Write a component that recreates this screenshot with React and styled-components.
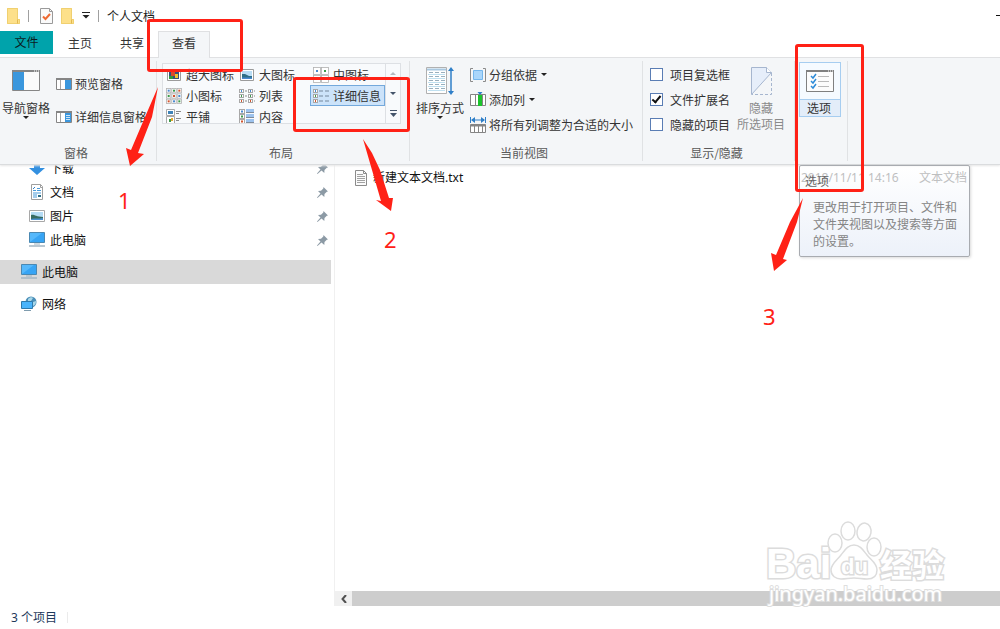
import React from 'react';
import styled, { createGlobalStyle } from 'styled-components'

const GlobalStyle = createGlobalStyle`
  * {
    box-sizing: border-box;
  }
  body {
    margin: 0;
    background: #fff;
    color: #1c1c1c;
    font: 12px/16px "Noto Sans CJK SC", "Liberation Sans", sans-serif;
  }
  button, input {
    margin: 0;
    padding: 0;
    border: 0;
    background: none;
    color: inherit;
    font: inherit;
  }
  svg {
    display: block;
    flex: none;
  }
`

const Window = styled.div`
  position: relative;
  display: flex;
  flex-direction: column;
  min-height: 100vh;
  overflow: hidden;
`

const TitleBar = styled.header`
  display: flex;
  align-items: center;
  height: 31px;
  padding-left: 7px;
  gap: 8px;
`

const Separator = styled.span`
  width: 1px;
  height: 12px;
  margin-right: ${props => (props.$wide ? '3px' : '0')};
  background: #a0a0a0;
`

const Title = styled.h1`
  margin: 0;
  flex: 1;
  font-size: 12px;
  font-weight: 400;
`

const IconButton = styled.button`
  display: flex;
`

const Tabs = styled.nav`
  display: flex;
  height: 27px;
  border-bottom: 1px solid #dfe0e2;
`

const Tab = styled.button`
  width: 52px;
  height: ${props => (props.$active ? '27px' : '24px')};
  padding-bottom: ${props => (props.$active ? '4px' : '1px')};
  border: 1px solid ${props => (props.$active ? '#dfe0e2' : 'transparent')};
  border-bottom: 0;
  background: ${props => (props.$active ? '#f4f6f8' : 'none')};
  color: #333;
`

const FileTab = styled(Tab)`
  width: 53px;
  height: 23px;
  margin-right: 1px;
  border: 0;
  background: #00a3ab;
  color: #0b1c1e;
`

const Ribbon = styled.div`
  display: flex;
  height: 107px;
  flex: none;
  background: #f4f6f8;
  border-bottom: 1px solid #dadcde;
  box-shadow: 0 1px 2px #e6e6e6;
  color: #333;
  z-index: 1;
`

const Group = styled.section`
  display: flex;
  flex-direction: column;
  flex: none;
  width: ${props => props.$width}px;
  background: linear-gradient(#e0e2e4, #e0e2e4) right 3px / 1px 100px no-repeat;
`

const GroupBody = styled.div`
  display: flex;
  flex: 1;
  padding-left: ${props => props.$inset || 0}px;
`

const GroupLabel = styled.h2`
  margin: 0 5px 3px 0;
  font-size: 12px;
  font-weight: 400;
  text-align: center;
  color: #5a5a5a;
`

const BigButton = styled.button`
  display: flex;
  flex-direction: column;
  align-items: center;
  width: ${props => props.$width}px;
  padding-top: 8px;
  white-space: nowrap;
  &:disabled {
    color: #8a8a8a;
  }
`

const BigIcon = styled.span`
  display: flex;
  align-items: center;
  height: 30px;
  margin-bottom: 4px;
`

const Stack = styled.div`
  display: flex;
  flex-direction: column;
  padding: ${props => props.$top}px 0 0 ${props => props.$left || 0}px;
`

const SmallButton = styled.button`
  display: flex;
  align-items: center;
  gap: 3px;
  height: ${props => props.$height}px;
  white-space: nowrap;
`

const Caret = styled.span`
  border: 3px solid transparent;
  border-top-color: #222;
  border-bottom: 0;
  margin-left: ${props => (props.$inline ? '1px' : '0')};
`

const Gallery = styled.div`
  display: flex;
  height: 61px;
  margin-top: 5px;
  border: 1px solid #dde0e4;
  background: #f8fafc;
  overflow: hidden;
`

const GalleryGrid = styled.div`
  display: grid;
  grid-template-columns: 73px 74px 75px;
  grid-auto-rows: 21px;
`

const GalleryItem = styled.button`
  display: flex;
  align-items: center;
  gap: 4px;
  padding-left: 2px;
  border: 1px solid ${props => (props.$selected ? '#74a9dc' : 'transparent')};
  background: ${props => (props.$selected ? '#cce3fa' : 'none')};
  white-space: nowrap;
`

const GalleryScroll = styled.div`
  display: flex;
  flex-direction: column;
  width: 15px;
  border-left: 1px solid #dde0e4;
`

const ScrollStep = styled.button`
  display: flex;
  align-items: center;
  justify-content: center;
  height: 20px;
`

const CheckRow = styled.label`
  display: flex;
  align-items: center;
  gap: 7px;
  height: 25px;
  white-space: nowrap;
`

const CheckBox = styled.input`
  appearance: none;
  position: relative;
  width: 13px;
  height: 13px;
  border: 1px solid #5a7db4;
  background: #fff;
  &:checked::after {
    content: '';
    box-sizing: border-box;
    position: absolute;
    left: 3px;
    top: 0;
    width: 5px;
    height: 9px;
    border: solid #111;
    border-width: 0 2px 2px 0;
    transform: rotate(40deg);
  }
`

const OptionsButton = styled.button`
  width: 42px;
  height: 55px;
  margin-top: 4px;
  border: 1px solid #a6cdf0;
  background: #f5faff;
`

const OptionsIcon = styled.span`
  display: flex;
  align-items: center;
  justify-content: center;
  height: 36px;
`

const OptionsText = styled.span`
  display: block;
  height: 17px;
  border-top: 1px solid #a6cdf0;
  background: #e3edf9;
  padding-right: 2px;
`

const Content = styled.div`
  display: flex;
  flex: 1;
`

const Sidebar = styled.nav`
  width: 335px;
  flex: none;
  padding-right: 3px;
  border-right: 1px solid #f0f0f0;
  overflow: hidden;
`

const Tree = styled.ul`
  list-style: none;
  margin: -9px 0 0;
  padding: 0;
`

const TreeRow = styled.li`
  display: flex;
  align-items: center;
  height: 24px;
  margin-top: ${props => (props.$root ? '8px' : '0')};
  padding: 0 3px 0 ${props => (props.$root ? '21px' : '29px')};
  background: ${props => (props.$selected ? '#d9d9d9' : 'none')};
`

const TreeLink = styled.a`
  display: flex;
  align-items: center;
  gap: 5px;
  flex: 1;
  height: 22px;
  padding-bottom: 1px;
  color: #111;
  text-decoration: none;
`

const Files = styled.main`
  display: flex;
  flex-direction: column;
  flex: 1;
  min-width: 0;
`

const FileTable = styled.table`
  width: 100%;
  table-layout: fixed;
  border-collapse: collapse;
  td {
    height: 25px;
    padding: 0;
    white-space: nowrap;
    color: #8e8e8e;
    font-family: "Noto Sans", "Noto Sans CJK SC", sans-serif;
  }
`

const FileName = styled.span`
  display: flex;
  align-items: center;
  gap: 5px;
  padding-left: 19px;
  color: #111;
`

const ScrollBar = styled.div`
  display: flex;
  height: 15px;
  margin-top: auto;
  background: #f0f0f0;
`

const ScrollLeft = styled.button`
  display: flex;
  align-items: center;
  justify-content: center;
  width: 17px;
`

const ScrollThumb = styled.div`
  flex: 1;
  background: #cdcdcd;
`

const StatusBar = styled.footer`
  display: flex;
  align-items: center;
  gap: 10px;
  height: 23px;
  padding-left: 11px;
  color: #1e395b;
  font-family: "Noto Sans", "Noto Sans CJK SC", sans-serif;
  span {
    width: 1px;
    height: 11px;
    background: #ebebeb;
  }
`

const Tooltip = styled.div`
  position: absolute;
  left: 799px;
  top: 165px;
  width: 171px;
  height: 92px;
  padding: 7px 0 0 5px;
  border: 1px solid #a8abb0;
  border-radius: 2px;
  background: linear-gradient(rgba(255, 255, 255, 0.4), rgba(232, 238, 248, 0.8));
  box-shadow: 1px 1px 3px rgba(0, 0, 0, 0.15);
  color: #666;
  z-index: 2;
  p {
    width: 150px;
    margin: 9px 0 0 8px;
    line-height: 17px;
    color: #858585;
  }
`

const Marks = styled.div`
  position: absolute;
  inset: 0;
  pointer-events: none;
  z-index: 3;
`

const MarkBox = styled.div`
  position: absolute;
  left: ${props => props.$x}px;
  top: ${props => props.$y}px;
  width: ${props => props.$w}px;
  height: ${props => props.$h}px;
  border: 3px solid #ff2116;
  border-radius: 3px;
`

const MarkNumber = styled.span`
  position: absolute;
  left: ${props => props.$x}px;
  top: ${props => props.$y}px;
  font: 22px/24px "Noto Sans", sans-serif;
  color: #ff2116;
`

const Arrows = styled.svg`
  position: absolute;
  left: 0;
  top: 0;
`

const Watermark = styled.svg`
  position: absolute;
  right: 50px;
  bottom: 19px;
  z-index: 3;
`

const Folder = () => (
  <svg width="13" height="16" viewBox="0 0 13 16">
    <path d="M0 0h11v11h2v5H0z" fill="#fde08a" />
    <path d="M.5.5h10v11h2v4H.5z" fill="none" stroke="#f0d070" />
    <path d="M10.500 11.500v4" stroke="#e2b850" />
  </svg>
);

const DocCheck = () => (
  <svg width="13" height="16" viewBox="0 0 13 16">
    <path d="M.5.5h9l3 3v12H.5z" fill="#fafafa" stroke="#9a9a9a" />
    <path d="M9.500.5v3h3" fill="none" stroke="#9a9a9a" />
    <path d="M3 8.500l2.500 2.500L10 6" fill="none" stroke="#ee6a32" strokeWidth="2" />
  </svg>
);

const QuickMenu = () => (
  <svg width="8" height="7" viewBox="0 0 8 7">
    <path d="M0 .5h8" stroke="#222" />
    <path d="M.5 3h7L4 6.500z" fill="#222" />
  </svg>
);

const NavPane = () => (
  <svg width="28" height="22" viewBox="0 0 28 22">
    <path d="M.5.5h27v20H.5z" fill="#fbfbfb" stroke="#868686" />
    <path d="M0 1h28" stroke="#868686" strokeWidth="2" />
    <path d="M1 2h11v18H1z" fill="#3b97dd" />
    <path d="M22 1h1m1 0h1m1 0h1" stroke="#fff" />
  </svg>
);

const PreviewPane = ({ details }) => (
  <svg width="16" height="12" viewBox="0 0 16 12">
    <path d="M.5.5h15v11H.5z" fill="#fff" stroke="#858585" />
    <path d="M0 1h16" stroke="#858585" strokeWidth="2" />
    <path d="M4.500 2v9" stroke="#a5a5a5" />
    <path d="M9 2h6v9H9z" fill="#3b97dd" />
    {details && <path d="M10 4.500h4M10 6.500h4M10 8.500h4" stroke="#cfe6f8" />}
  </svg>
);

const Picture = ({ large }) => (
  <svg width="16" height="12" viewBox="0 0 16 12">
    <path d="M1.500.5h13v11h-13z" fill="#fff" stroke="#9b9b9b" />
    {large ? (
      <g>
        <path d="M3 2h10v8H3z" fill="#35507a" />
        <path d="M3 7h4v3H3z" fill="#2f9a3c" />
        <path d="M5 3h4v4H5z" fill="#d84b2c" />
        <path d="M9 5h3v4H9z" fill="#f0c02e" />
      </g>
    ) : (
      <g>
        <path d="M3 2h10v8H3z" fill="#b9ddf5" />
        <path d="M3 5l3 0 4 2h3v3H3z" fill="#2f6f86" />
        <path d="M3 8.500h10V10H3z" fill="#4a8ad0" />
      </g>
    )}
  </svg>
);

const dots = ['#4a8ad0', '#3a9a4a', '#d2552f'];

const Tiles = ({ cols, rows }) => {
  const w = 16 / cols;
  const h = 16 / rows;
  const cells = [];
  for (let r = 0; r < rows; r++) {
    for (let c = 0; c < cols; c++) {
      cells.push(
        <g key={`${r}-${c}`}>
          <rect x={c * w + 0.5} y={r * h + 0.5} width={w - 1} height={h - 1} fill="#fff" stroke="#b0b0b0" strokeWidth=".8" />
          <rect x={c * w + w / 2 - 1} y={r * h + h / 2 - 1} width="2" height="2" fill={dots[(r + c) % 3]} />
        </g>
      );
    }
  }
  return <svg width="16" height="16" viewBox="0 0 16 16">{cells}</svg>;
};

const ListIcon = ({ details }) => (
  <svg width="16" height="14" viewBox="0 0 16 14">
    {[0, 5, 10].map((y, i) => (
      <g key={y}>
        <rect x="0.500" y={y + 0.5} width="4" height="3" fill="#fff" stroke="#a8a8a8" />
        <rect x="2" y={y + 1} width="1" height="2" fill={dots[i]} />
        {details ? (
          <path d={`M6 ${y + 2}h4M12 ${y + 2}h4`} stroke="#75879c" />
        ) : (
          <g>
            <path d={`M6 ${y + 2}h2M15 ${y + 2}h1`} stroke="#8b8b8b" />
            <rect x="9.500" y={y + 0.5} width="4" height="3" fill="#fff" stroke="#a8a8a8" />
            <rect x="11" y={y + 1} width="1" height="2" fill={dots[i]} />
          </g>
        )}
      </g>
    ))}
  </svg>
);

const TileView = () => (
  <svg width="16" height="15" viewBox="0 0 16 15">
    <path d="M.5.5h8v6h-8zM.5 7.500h8v7h-8z" fill="#fff" stroke="#a8a8a8" />
    <path d="M2 2h5v3H2z" fill="#3e83b8" />
    <path d="M3 10h2v3H3z" fill="#3a9a4a" />
    <path d="M5 9h2v3H5z" fill="#e5a82e" />
    <path d="M10 2.500h5M10 4.500h3M10 9.500h5M10 11.500h3" stroke="#8b8b8b" />
  </svg>
);

const ContentView = () => (
  <svg width="16" height="15" viewBox="0 0 16 15">
    {[0, 5, 10].map((y, i) => (
      <g key={y}>
        <rect x="0.500" y={y + 0.5} width="5" height="4" fill="#fff" stroke="#a8a8a8" />
        <rect x="2" y={y + 1.5} width="2" height="2" fill={dots[i]} />
        <rect x="7" y={y} width="8" height="3" fill="#9dc3ee" />
        <path d={`M7 ${y + 3.5}h8`} stroke="#7f8b99" />
      </g>
    ))}
  </svg>
);

const SortIcon = () => (
  <svg width="28" height="28" viewBox="0 0 28 28">
    <path d="M.5.5h20v26H.5z" fill="#fff" stroke="#b0b0b0" />
    <path d="M1 2.500h19" stroke="#a9c8e0" strokeWidth="2" />
    {[5, 9, 13, 17, 21].map(y => (
      <path key={y} d={`M3 ${y + 0.5}h4M9 ${y + 0.5}h4M15 ${y + 0.5}h4`} stroke="#9ab0be" />
    ))}
    {[7, 11, 15, 19, 23].map(y => (
      <path key={y} d={`M2 ${y + 0.5}h17`} stroke="#bfe0f0" />
    ))}
    <path d="M25 2v24" stroke="#2f7fc8" strokeWidth="1.500" />
    <path d="M22 4l3-4 3 4zM22 24l3 4 3-4z" fill="#2f7fc8" />
  </svg>
);

const GroupByIcon = () => (
  <svg width="16" height="14" viewBox="0 0 16 14">
    <path d="M3 .5H.5v13H3M13 .5h2.500v13H13" fill="none" stroke="#8b8b8b" />
    <path d="M3.500 2.500h9v9h-9z" fill="#a9d6fb" stroke="#74b6ec" />
  </svg>
);

const AddColumnIcon = () => (
  <svg width="16" height="15" viewBox="0 0 16 15">
    <path d="M.5 2.500h15v11H.5z" fill="#fff" stroke="#858585" />
    <path d="M5.500 3v11M12.500 3v11" stroke="#858585" />
    <path d="M8 3h4v11H8z" fill="#1cc32c" />
    <path d="M7.500 0h5L10 3z" fill="#2f7fc8" />
  </svg>
);

const FitColumnsIcon = () => (
  <svg width="16" height="16" viewBox="0 0 16 16">
    <path d="M.5 0v6M15.500 0v6M2 3h12" stroke="#2f7fc8" />
    <path d="M1 3l4-3v6zM15 3l-4-3v6z" fill="#2f7fc8" />
    <path d="M.5 7.500h15v8H.5z" fill="#fff" stroke="#858585" />
    <path d="M1 8.500h14" stroke="#858585" strokeWidth="2" />
    <path d="M4.500 9v6M8.500 9v6M12.500 9v6" stroke="#858585" />
  </svg>
);

const HideIcon = () => (
  <svg width="21" height="28" viewBox="0 0 21 28">
    <path d="M.5.5h15l5 5L.5 27.500z" fill="#e6eefa" stroke="#a6b6cf" />
    <path d="M15.500.5v5h5" fill="#fff" stroke="#a6b6cf" />
    <path d="M20.500 6v21.500H1" fill="none" stroke="#a6b6cf" strokeDasharray="3 2" />
  </svg>
);

const OptionsGlyph = () => (
  <svg width="28" height="22" viewBox="0 0 28 22">
    <path d="M.5.5h27v21H.5z" fill="#fcfcfc" stroke="#808080" />
    <path d="M0 1h28" stroke="#808080" strokeWidth="2" />
    <path d="M22 1h1m1 0h1m1 0h1" stroke="#fff" />
    {[5, 10, 15].map(y => (
      <g key={y}>
        <path d={`M5 ${y + 1}l2 2 3-4`} fill="none" stroke="#2d8bd8" strokeWidth="1.500" />
        <path d={`M12 ${y + 1.5}h11`} stroke="#b9b9b9" />
      </g>
    ))}
  </svg>
);

const Download = () => (
  <svg width="16" height="16" viewBox="0 0 16 16">
    <path d="M5 1h6v7h5l-8 7-8-7h5z" fill="#3390e0" />
  </svg>
);

const DocIcon = () => (
  <svg width="16" height="16" viewBox="0 0 16 16">
    <path d="M2.500.5h9l2 2v13h-11z" fill="#fff" stroke="#9f9f9f" />
    <path d="M11.500.5v3h2" fill="none" stroke="#9f9f9f" />
    <path d="M8 4.500h3M8 6.500h4M4 6.500h3M4 9h8M4 11h4M4 13h4" stroke="#4a9bd8" />
    <path d="M9 11h3v2H9z" fill="#2f6f86" />
    <path d="M4 5l2-2" stroke="#2f7fc8" />
  </svg>
);

const ImageIcon = () => (
  <svg width="16" height="12" viewBox="0 0 16 12">
    <path d="M.5.5h15v11H.5z" fill="#fff" stroke="#a8a8a8" />
    <path d="M2 2h12v8H2z" fill="#b5dcf5" />
    <path d="M2 5c3-1 5 2 12 2v2H2z" fill="#376b61" />
    <path d="M2 9c4-1 8 0 12-1v2H2z" fill="#4b90cf" />
  </svg>
);

const Computer = () => (
  <svg width="16" height="15" viewBox="0 0 16 15">
    <path d="M.5.5h15v10H.5z" fill="#55b8fb" stroke="#4a88b2" />
    <path d="M1 10L13 1h2v9z" fill="#37a4f4" />
    <path d="M5 12h6" stroke="#9fb4c2" />
    <path d="M0 14h16" stroke="#a3b6c3" strokeWidth="1.500" />
  </svg>
);

const Network = () => (
  <svg width="16" height="16" viewBox="0 0 16 16">
    <circle cx="10" cy="6" r="5.500" fill="#4b8fb8" />
    <path d="M7 3c2-2 4-2 5-1l-2 3-3 1zM12 6l3-1c0 3-1 4-3 5z" fill="#a9d7e8" />
    <path d="M.5 5.500h11v7H.5z" fill="#4ab4fb" stroke="#2f7aac" />
    <path d="M3 14.500h7" stroke="#7f9cae" />
  </svg>
);

const Pin = () => (
  <svg width="11" height="11" viewBox="0 0 11 11">
    <path d="M6.500 0L11 4.500l-1.200.3L7.500 7l-.2 3L4.500 7.500.5 11 0 10.500 3.500 6.500 1 4l3-.3L6.300 1.500z" fill="#8c9aa5" />
  </svg>
);

const TextFile = () => (
  <svg width="14" height="16" viewBox="0 0 14 16">
    <path d="M1.500.5h8l3 3v12h-11z" fill="#fbfbfb" stroke="#8b8b8b" />
    <path d="M9.500.5v3h3" fill="none" stroke="#8b8b8b" />
    <path d="M3 4.500h6M3 6.500h8M3 8.500h8M3 10.500h8M3 12.500h8" stroke="#a2a2a2" />
  </svg>
);

const views = [
  { name: '超大图标', icon: <Picture large /> },
  { name: '大图标', icon: <Picture /> },
  { name: '中图标', icon: <Tiles cols={2} rows={2} /> },
  { name: '小图标', icon: <Tiles cols={3} rows={3} /> },
  { name: '列表', icon: <ListIcon /> },
  { name: '详细信息', icon: <ListIcon details />, selected: true },
  { name: '平铺', icon: <TileView /> },
  { name: '内容', icon: <ContentView /> }
];

const places = [
  { name: '下载', icon: <Download />, pinned: true },
  { name: '文档', icon: <DocIcon />, pinned: true },
  { name: '图片', icon: <ImageIcon />, pinned: true },
  { name: '此电脑', icon: <Computer />, pinned: true },
  { name: '此电脑', icon: <Computer />, root: true, selected: true },
  { name: '网络', icon: <Network />, root: true }
];

function RibbonBar() {
  return (
    <Ribbon>
      <Group $width={157}>
        <GroupBody>
          <BigButton $width={52}>
            <BigIcon><NavPane /></BigIcon>
            导航窗格
            <Caret />
          </BigButton>
          <Stack $top={9} $left={4}>
            <SmallButton $height={33}><PreviewPane />预览窗格</SmallButton>
            <SmallButton $height={33}><PreviewPane details />详细信息窗格</SmallButton>
          </Stack>
        </GroupBody>
        <GroupLabel>窗格</GroupLabel>
      </Group>
      <Group $width={253}>
        <GroupBody $inset={5}>
          <Gallery>
            <GalleryGrid>
              {views.map(view => (
                <GalleryItem key={view.name} $selected={view.selected}>
                  {view.icon}
                  {view.name}
                </GalleryItem>
              ))}
            </GalleryGrid>
            <GalleryScroll>
              <ScrollStep aria-label="上一行">
                <svg width="6" height="3"><path d="M0 3l3-3 3 3z" fill="#b5bac0" /></svg>
              </ScrollStep>
              <ScrollStep aria-label="下一行">
                <svg width="6" height="3"><path d="M0 0l3 3 3-3z" fill="#44546a" /></svg>
              </ScrollStep>
              <ScrollStep aria-label="更多">
                <svg width="7" height="7"><path d="M0 0h7v1H0zM0 3l3.500 4L7 3z" fill="#44546a" /></svg>
              </ScrollStep>
            </GalleryScroll>
          </Gallery>
        </GroupBody>
        <GroupLabel>布局</GroupLabel>
      </Group>
      <Group $width={233}>
        <GroupBody>
          <BigButton $width={60}>
            <BigIcon><SortIcon /></BigIcon>
            排序方式
            <Caret />
          </BigButton>
          <Stack $top={4}>
            <SmallButton $height={25}><GroupByIcon />分组依据<Caret $inline /></SmallButton>
            <SmallButton $height={25}><AddColumnIcon />添加列<Caret $inline /></SmallButton>
            <SmallButton $height={25}><FitColumnsIcon />将所有列调整为合适的大小</SmallButton>
          </Stack>
        </GroupBody>
        <GroupLabel>当前视图</GroupLabel>
      </Group>
      <Group $width={152}>
        <GroupBody $inset={7}>
          <Stack $top={4}>
            <CheckRow><CheckBox type="checkbox" />项目复选框</CheckRow>
            <CheckRow><CheckBox type="checkbox" defaultChecked />文件扩展名</CheckRow>
            <CheckRow><CheckBox type="checkbox" />隐藏的项目</CheckRow>
          </Stack>
          <BigButton $width={62} disabled>
            <BigIcon><HideIcon /></BigIcon>
            <span>隐藏</span>
            <span>所选项目</span>
          </BigButton>
        </GroupBody>
        <GroupLabel>显示/隐藏</GroupLabel>
      </Group>
      <Group $width={53}>
        <GroupBody $inset={4}>
          <OptionsButton>
            <OptionsIcon><OptionsGlyph /></OptionsIcon>
            <OptionsText>选项</OptionsText>
          </OptionsButton>
        </GroupBody>
      </Group>
    </Ribbon>
  );
}

function BaiduMark() {
  return (
    <Watermark width="184" height="90" viewBox="0 0 184 90" fill="#fff" stroke="#dcdcdc" strokeWidth="1.500">
      <text x="0" y="58" fontFamily="Liberation Sans, sans-serif" fontWeight="700" fontSize="42" strokeWidth="3" paintOrder="stroke">Bai</text>
      <ellipse cx="69" cy="23" rx="7" ry="9" />
      <ellipse cx="82" cy="11" rx="7" ry="9" />
      <ellipse cx="98" cy="12" rx="7" ry="9" transform="rotate(10 98 12)" />
      <ellipse cx="108" cy="27" rx="7" ry="9" />
      <path d="M88 25c6 0 9 5 13 10s10 8 10 15-5 9-10 9-8-1-13-1-8 1-13 1-10-3-10-9 6-10 10-15 7-10 13-10z" />
      <text x="75" y="54" fontFamily="Liberation Sans, sans-serif" fontWeight="700" fontSize="22" strokeWidth="3" paintOrder="stroke">du</text>
      <text x="114" y="57" fontFamily="Noto Sans CJK SC, sans-serif" fontWeight="700" fontSize="32" strokeWidth="3" paintOrder="stroke">经验</text>
      <text x="3" y="81" fontFamily="Noto Sans, sans-serif" fontSize="20" strokeWidth="2" stroke="#dedede" paintOrder="stroke">jingyan.baidu.com</text>
    </Watermark>
  );
}

export default function App() {
  return (
    <Window>
      <GlobalStyle />
      <TitleBar>
        <Folder />
        <Separator $wide />
        <IconButton aria-label="属性"><DocCheck /></IconButton>
        <IconButton aria-label="新建文件夹"><Folder /></IconButton>
        <IconButton aria-label="自定义"><QuickMenu /></IconButton>
        <Separator />
        <Title>个人文档</Title>
        <IconButton aria-label="最小化">
          <svg width="4" height="1"><path d="M0 0h4v1H0z" fill="#111" /></svg>
        </IconButton>
      </TitleBar>
      <Tabs>
        <FileTab>文件</FileTab>
        <Tab>主页</Tab>
        <Tab>共享</Tab>
        <Tab $active>查看</Tab>
      </Tabs>
      <RibbonBar />
      <Content>
        <Sidebar>
          <Tree>
            {places.map((place, i) => (
              <TreeRow key={i} $root={place.root} $selected={place.selected}>
                <TreeLink href="#">{place.icon}{place.name}</TreeLink>
                {place.pinned && <Pin />}
              </TreeRow>
            ))}
          </Tree>
        </Sidebar>
        <Files>
          <FileTable>
            <colgroup>
              <col width="466" />
              <col width="118" />
              <col />
            </colgroup>
            <tbody>
              <tr>
                <td><FileName><TextFile />新建文本文档.txt</FileName></td>
                <td>2018/11/11 14:16</td>
                <td>文本文档</td>
              </tr>
            </tbody>
          </FileTable>
          <ScrollBar>
            <ScrollLeft aria-label="向左滚动">
              <svg width="6" height="8"><path d="M5 0L1.500 4 5 8" fill="none" stroke="#505050" strokeWidth="2" /></svg>
            </ScrollLeft>
            <ScrollThumb />
          </ScrollBar>
        </Files>
      </Content>
      <StatusBar>3 个项目<span /></StatusBar>
      <Tooltip role="tooltip">
        选项
        <p>更改用于打开项目、文件和文件夹视图以及搜索等方面的设置。</p>
      </Tooltip>
      <BaiduMark />
      <Marks>
        <MarkBox $x={147} $y={19} $w={96} $h={53} />
        <MarkBox $x={293} $y={77} $w={117} $h={55} />
        <MarkBox $x={795} $y={44} $w={69} $h={148} />
        <Arrows width="1000" height="300" viewBox="0 0 1000 300" fill="#ff2116">
          <path d="M158 87L145 117 131 150 126 148 130 166 144 154 138 153 152 117z" />
          <path d="M363 139L372 170 381 201 376 200 391 211 393 198 389 198 380 170 372 153z" />
          <path d="M803 198L790 222 776 255 771 253 774 271 787 260 783 259 797 222z" />
        </Arrows>
        <MarkNumber $x={118} $y={188}>1</MarkNumber>
        <MarkNumber $x={384} $y={227}>2</MarkNumber>
        <MarkNumber $x={763} $y={304}>3</MarkNumber>
      </Marks>
    </Window>
  );
}
